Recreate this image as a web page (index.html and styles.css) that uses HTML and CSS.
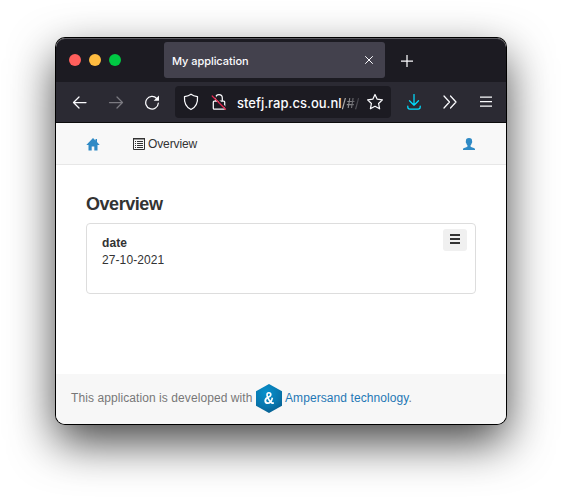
FILE: index.html
```html
<!DOCTYPE html>
<html lang="en">
<head>
<meta charset="utf-8">
<title>My application</title>
<link rel="stylesheet" href="styles.css">
</head>
<body>
<div class="window">
  <div class="tabbar">
    <div class="lights"><i class="red"></i><i class="yellow"></i><i class="green"></i></div>
    <div class="tab">
      <span class="tab-title">My application</span>
      <svg class="tab-close" width="8" height="8" viewBox="0 0 8 8"><path d="M.5.5l7 7M7.5.5l-7 7"/></svg>
    </div>
    <svg class="new-tab" width="12" height="12" viewBox="0 0 12 12"><path d="M6 0v12M0 6h12"/></svg>
  </div>
  <div class="toolbar">
    <svg class="back" width="16" height="16" viewBox="0 0 16 16"><path d="M14 8.500H1.500M7 3L1.500 8.500 7 14"/></svg>
    <svg class="forward" width="16" height="16" viewBox="0 0 16 16"><path d="M1.500 8.500h13M9 3l5.500 5.500L9 14"/></svg>
    <svg class="reload" width="16" height="16" viewBox="0 0 16 16"><path d="M14.300 9.200A6.300 6.300 0 1 1 12.700 4.500"/><path class="solid" d="M15 1.500v5.300H9.700z"/></svg>
    <div class="urlbar">
      <svg class="shield" width="16" height="18" viewBox="0 0 16 18"><path d="M8 1.200C6 2.800 3.700 3.300 1.500 3.600 1 9.500 3.200 14.200 8 16.500c4.800-2.300 7-7 6.500-12.900C12.300 3.300 10 2.800 8 1.200z"/></svg>
      <svg class="lock" width="16" height="18" viewBox="0 0 16 18"><path d="M4.700 8V5a3.300 3.300 0 0 1 6.600 0V8M3.300 8h9.400q1 0 1 1v6.200q0 1-1 1H3.300q-1 0-1-1V9q0-1 1-1z"/><path class="gap" d="M2.500 2l13 13.500"/><path class="slash" d="M1.200 3l13.300 13.300"/></svg>
      <span class="url">stefj.rap.cs.ou.nl<span class="path">/#/</span></span>
      <svg class="star" width="18" height="18" viewBox="0 0 18 18"><path d="M9 1.500l2.200 4.700 5.200.700-3.800 3.600 1 5.300L9 13.300l-4.600 2.500 1-5.300L1.600 6.900l5.200-.700z"/></svg>
    </div>
    <svg class="download" width="14" height="16" viewBox="0 0 14 16"><path d="M7 .5v10.500M2.500 6.700L7 11.200l4.500-4.500M.8 12v1q0 2 2 2h8.400q2 0 2-2v-1"/></svg>
    <svg class="more" width="14" height="14" viewBox="0 0 14 14"><path d="M1 1l5.500 6L1 13M7.500 1L13 7l-5.500 6"/></svg>
    <svg class="menu" width="12" height="11" viewBox="0 0 12 11"><path d="M0 1h12M0 5.500h12M0 10h12"/></svg>
  </div>
  <nav class="navbar">
    <svg class="home" width="14" height="13" viewBox="0 0 14 13"><path d="M7 0l2.500 2.500V1H11v3l2.700 2.900H11.500V12.500H8.300V8.500H5.700V12.500H2.500V6.900H.3z"/></svg>
    <a class="nav-item"><svg width="12" height="12" viewBox="0 0 12 12"><path class="frame" d="M.5.500h11v11H.5z"/><path class="head" d="M0 0h12v1.500H0z"/><path class="rows" d="M2 3.500h1M4 3.500h6M2 5.500h1M4 5.500h6M2 7.500h1M4 7.500h6M2 9.500h1M4 9.500h6"/></svg><span>Overview</span></a>
    <svg class="user" width="12" height="12" viewBox="0 0 12 12"><path d="M6 0C3.800 0 2.800 1.200 2.900 3.200 2.600 3.600 2.800 4.800 3.300 5.200c.2 1 .6 1.700 1.200 2.200v1.200C3.500 9.600 0 9.800 0 11.200v.8h12v-.8c0-1.400-3.500-1.600-4.500-2.600V7.400c.6-.5 1-1.200 1.200-2.200.5-.4.700-1.600.4-2C9.200 1.200 8.200 0 6 0z"/></svg>
  </nav>
  <main class="content">
    <h1>Overview</h1>
    <section class="card">
      <div class="field"><b>date</b><span>27-10-2021</span></div>
      <button class="card-menu"><svg width="10" height="10" viewBox="0 0 10 10"><path d="M0 1h10M0 5h10M0 9h10"/></svg></button>
    </section>
  </main>
  <footer class="footer">
    <span class="credit">This application is developed with</span>
    <span class="logo"><span class="amp">&amp;</span></span>
    <span class="brand"><a>Ampersand technology</a>.</span>
  </footer>
</div>
</body>
</html>
```
FILE: styles.css
```css
* { box-sizing: border-box; }
body {
  margin: 0;
  padding: 38px 56px 0;
  height: 498px;
  overflow: hidden;
  background: #fff;
  color: #333;
  font: 12px/17px "Liberation Sans", Arial, sans-serif;
}
svg { display: block; flex: none; fill: none; stroke: #fbfbfe; stroke-width: 1.25; stroke-linecap: round; stroke-linejoin: round; }
.window {
  display: flex;
  flex-direction: column;
  width: 450px;
  height: 386px;
  border-radius: 9px;
  overflow: hidden;
  background: #fff;
  box-shadow: 0 0 0 1px #000, 0 18px 46px rgba(0, 0, 0, .74);
}
.tabbar {
  display: flex;
  align-items: center;
  height: 44px;
  background: #1c1b22;
  border-radius: 9px 9px 0 0;
  box-shadow: inset 0 1px 0 #5b5a60;
}
.lights { display: flex; gap: 8px; margin-left: 13px; width: 95px; }
.lights i { width: 12px; height: 12px; border-radius: 50%; }
.red { background: #ff5f5c; }
.yellow { background: #ffbc40; }
.green { background: #00c943; }
.tab {
  display: flex;
  align-items: center;
  justify-content: space-between;
  width: 221px;
  height: 36px;
  padding: 1px 12px 0 8px;
  border-radius: 3px;
  background: #43414d;
}
.tab-title { color: #fbfbfe; font: 500 11px/16px Inter, sans-serif; letter-spacing: -.05px; }
.tab-close { margin-top: -2px; stroke-width: 1; }
.new-tab { margin: 1px 0 0 16px; stroke-linecap: butt; }
.toolbar {
  display: flex;
  align-items: center;
  height: 41px;
  padding-left: 16px;
  background: #2b2a33;
  border-bottom: 1px solid #0c0c0d;
}
.forward { margin-left: 20px; stroke: #7b7a81; }
.reload { margin-left: 20px; }
.solid { fill: #fbfbfe; stroke: none; }
.urlbar {
  display: flex;
  align-items: center;
  width: 216px;
  height: 32px;
  margin-left: 15px;
  padding-left: 8px;
  border-radius: 4px;
  background: #1c1b22;
}
.lock { margin-left: 12px; }
.gap { stroke: #1c1b22; stroke-width: 1.5; }
.slash { stroke: #e22850; }
.url {
  width: 122px;
  margin: 2px 0 0 10px;
  overflow: hidden;
  white-space: nowrap;
  color: #fbfbfe;
  font: 500 13px/20px Inter, sans-serif;
}
.path { background: linear-gradient(90deg, #bbb, #38373f); background-clip: text; color: transparent; }
.star { margin-left: 7px; }
.download { margin-left: 16px; stroke: #00ddff; }
.more { margin-left: 22px; }
.menu { margin: -1px 0 0 23px; stroke-linecap: butt; }
.navbar {
  display: flex;
  align-items: center;
  height: 42px;
  padding: 1px 31px 0 30px;
  background: #f8f8f8;
  border: solid #e7e7e7;
  border-width: 0 0 1px;
}
.home, .user { fill: #2f8ac5; stroke: none; }
.nav-item { display: flex; align-items: center; gap: 3px; margin-left: 33px; letter-spacing: -.12px; }
.nav-item span { padding-top: 1px; }
.nav-item svg { stroke: #333; stroke-width: 1; stroke-linecap: butt; }
.nav-item .head { fill: #333; stroke: none; }
.user { margin-left: auto; }
.content { flex: 1; padding: 28px 30px 0; }
h1 { margin: 0; font: bold 18px/22px "Liberation Sans", Arial, sans-serif; letter-spacing: -.45px; }
.card {
  display: flex;
  justify-content: space-between;
  align-items: flex-start;
  height: 71px;
  margin-top: 8px;
  padding: 5px 8px 0 15px;
  border: 1px solid #ddd;
  border-radius: 4px;
}
.field { display: flex; flex-direction: column; padding-top: 6px; letter-spacing: .09px; }
.card-menu {
  display: grid;
  place-items: start center;
  width: 24px;
  height: 22px;
  padding: 5px 0 0;
  border: 0;
  border-radius: 3px;
  background: #f0f0f0;
}
.card-menu svg { stroke: #333; stroke-width: 2; stroke-linecap: butt; }
.footer {
  display: flex;
  align-items: center;
  height: 50px;
  padding: 0 0 2px 15px;
  background: #f7f7f7;
  color: #777;
  white-space: nowrap;
}
.credit { width: 181px; letter-spacing: .08px; }
.brand { letter-spacing: .08px; }
.logo {
  width: 26px;
  height: 29px;
  margin: 1px 3px 0 4px;
  clip-path: polygon(50% 0, 100% 25%, 100% 75%, 50% 100%, 0 75%, 0 25%);
  background: radial-gradient(circle at 40% 30%, #0791cd, #0875ac 55%, #064f7c);
  color: #fff;
  font: bold 17px/30px "Liberation Sans", Arial, sans-serif;
  text-align: center;
}
.amp { display: inline-block; transform: scaleX(.86); }
.brand a { color: #1f78b5; }
```
